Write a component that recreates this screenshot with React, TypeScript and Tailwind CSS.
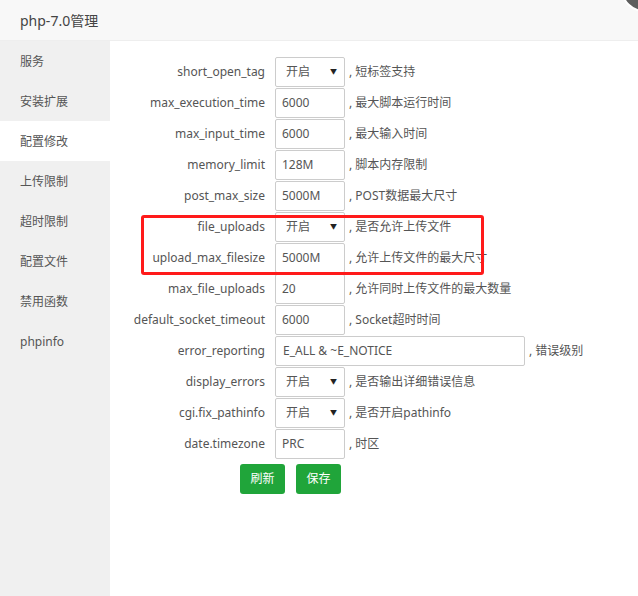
const rows: { label: string; kind: "select" | "input"; value?: string; wide?: boolean; note: string }[] = [
  { label: "short_open_tag", kind: "select", note: ", 短标签支持" },
  { label: "max_execution_time", kind: "input", value: "6000", note: ", 最大脚本运行时间" },
  { label: "max_input_time", kind: "input", value: "6000", note: ", 最大输入时间" },
  { label: "memory_limit", kind: "input", value: "128M", note: ", 脚本内存限制" },
  { label: "post_max_size", kind: "input", value: "5000M", note: ", POST数据最大尺寸" },
  { label: "file_uploads", kind: "select", note: ", 是否允许上传文件" },
  { label: "upload_max_filesize", kind: "input", value: "5000M", note: ", 允许上传文件的最大尺寸" },
  { label: "max_file_uploads", kind: "input", value: "20", note: ", 允许同时上传文件的最大数量" },
  { label: "default_socket_timeout", kind: "input", value: "6000", note: ", Socket超时时间" },
  { label: "error_reporting", kind: "input", value: "E_ALL & ~E_NOTICE", wide: true, note: ", 错误级别" },
  { label: "display_errors", kind: "select", note: ", 是否输出详细错误信息" },
  { label: "cgi.fix_pathinfo", kind: "select", note: ", 是否开启pathinfo" },
  { label: "date.timezone", kind: "input", value: "PRC", note: ", 时区" },
];

const menu = ["服务", "安装扩展", "配置修改", "上传限制", "超时限制", "配置文件", "禁用函数", "phpinfo"];

export default function App() {
  return (
    <div
      className="relative w-[638px] h-[596px] overflow-hidden bg-white text-[#555] flex flex-col"
      style={{ fontFamily: '"Noto Sans", "Noto Sans CJK SC", sans-serif' }}
    >
      {/* title bar */}
      <div className="h-[41px] shrink-0 bg-[#f8f8f8] border-b border-[#eee] flex items-center pl-5 text-[14px] text-[#444]">
        php-7.0管理
      </div>
      <div className="absolute right-[-29px] top-[-34px] w-[46px] h-[46px] rounded-full bg-[#5e5e5e] border-2 border-white">
        <div className="absolute left-[9px] top-[26px] w-[10px] h-[2px] bg-white rotate-[-45deg]" />
      </div>

      <div className="flex flex-1">
        {/* sidebar */}
        <div className="w-[110px] bg-[#f0f0f0] flex flex-col">
          {menu.map((m) => (
            <div
              key={m}
              className={`h-10 flex items-center pl-5 pt-[1px] text-[12px] text-[#555] ${m === "配置修改" ? "bg-white" : ""}`}
            >
              {m}
            </div>
          ))}
        </div>

        {/* form */}
        <div className="flex-1 pt-4 text-[12px]">
          <div className="flex flex-col gap-[1px]">
            {rows.map((r) => (
              <div key={r.label} className="flex items-center h-[30px]">
                <div className="w-[155px] text-right text-[#555]">{r.label}</div>
                <div
                  className={`ml-[10px] h-[30px] border border-[#ccc] rounded-[2px] flex items-center text-[#555] ${
                    r.wide ? "w-[250px] pl-[7px]" : r.kind === "select" ? "w-[70px] pl-[10px] pr-[7px] justify-between" : "w-[70px] pl-[6px]"
                  }`}
                >
                  {r.kind === "select" ? (
                    <>
                      <span>开启</span>
                      <span className="text-[7px] text-[#222]">▼</span>
                    </>
                  ) : (
                    <span>{r.value}</span>
                  )}
                </div>
                <div className="ml-[4px] text-[#555]">{r.note}</div>
              </div>
            ))}
          </div>
          <div className="flex gap-[11px] ml-[130px] mt-[5px]">
            <button className="w-[45px] h-[30px] rounded-[3px] bg-[#20a53a] text-white text-[12px]">刷新</button>
            <button className="w-[45px] h-[30px] rounded-[3px] bg-[#20a53a] text-white text-[12px]">保存</button>
          </div>
        </div>
      </div>

      {/* annotation */}
      <div className="absolute left-[141px] top-[215px] w-[343px] h-[60px] border-[3px] border-[#ff1a1a] rounded-[3px] pointer-events-none" />
    </div>
  );
}
